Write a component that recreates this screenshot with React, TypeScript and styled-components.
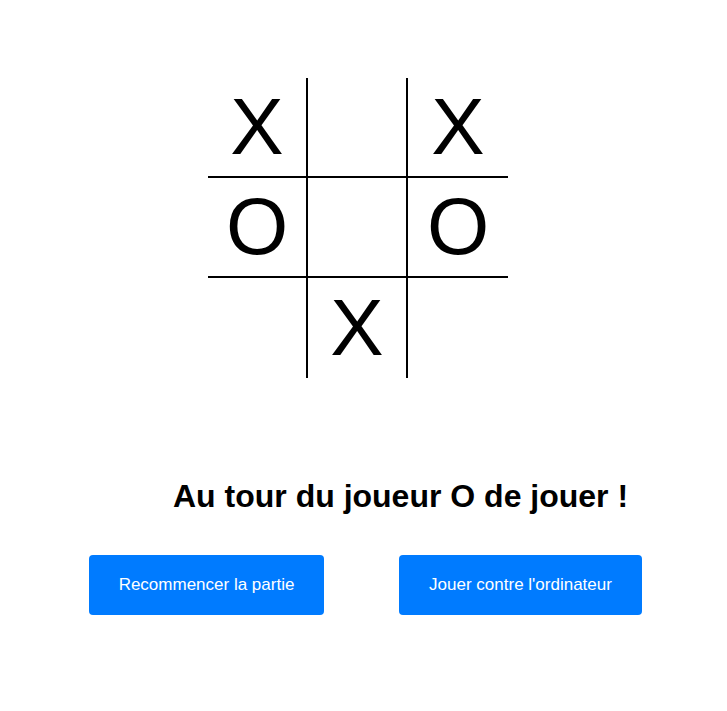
import React from "react";
import styled, { createGlobalStyle } from "styled-components";

const Global = createGlobalStyle`
  html, body { margin: 0; padding: 0; background: #ffffff; }
  body { font-family: "Liberation Sans", Arial, sans-serif; }
`;

const Page = styled.div`
  display: flex;
  flex-direction: column;
  align-items: flex-start;
  padding-top: 78px;
`;

const Board = styled.div`
  display: grid;
  grid-template-columns: repeat(3, 100px);
  grid-template-rows: repeat(3, 100px);
  margin-left: 208px;
`;

const Cell = styled.div<{ $right: boolean; $bottom: boolean }>`
  box-sizing: border-box;
  width: 100px;
  height: 100px;
  display: flex;
  align-items: center;
  justify-content: center;
  font-family: "Liberation Sans", Arial, sans-serif;
  font-size: 80px;
  line-height: 1;
  color: #000;
  border-right: ${(p) => (p.$right ? "2px solid #000" : "none")};
  border-bottom: ${(p) => (p.$bottom ? "2px solid #000" : "none")};
`;

const Status = styled.h2`
  margin: 100px 0 0 173px;
  font-family: "Liberation Sans", Arial, sans-serif;
  font-size: 32px;
  font-weight: bold;
  line-height: 37px;
  color: #000;
`;

const Actions = styled.div`
  display: flex;
  gap: 75px;
  margin: 40px 0 0 89px;
`;

const Button = styled.button<{ $w: number }>`
  box-sizing: border-box;
  width: ${(p) => p.$w}px;
  height: 60px;
  padding: 0;
  border: none;
  border-radius: 4px;
  background: #007bff;
  color: #ffffff;
  font-family: "Liberation Sans", Arial, sans-serif;
  font-size: 17px;
  text-align: center;
  cursor: pointer;
`;

const cells = ["X", "", "X", "O", "", "O", "", "X", ""];

export default function App() {
  return (
    <>
      <Global />
      <Page>
        <Board>
          {cells.map((v, i) => (
            <Cell key={i} $right={i % 3 !== 2} $bottom={i < 6}>
              {v}
            </Cell>
          ))}
        </Board>
        <Status>Au tour du joueur O de jouer !</Status>
        <Actions>
          <Button $w={235}>Recommencer la partie</Button>
          <Button $w={243}>Jouer contre l'ordinateur</Button>
        </Actions>
      </Page>
    </>
  );
}
